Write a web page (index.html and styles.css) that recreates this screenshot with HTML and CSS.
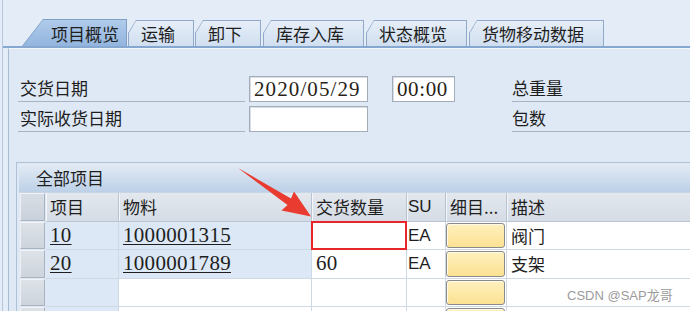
FILE: index.html
```html
<!DOCTYPE html>
<html lang="zh">
<head>
<meta charset="utf-8">
<link rel="stylesheet" href="styles.css">
</head>
<body>
<div class="screen">
  <div class="tabs">
    <div class="tab active"><span class="tab-in">项目概览</span></div>
    <div class="tab"><span class="tab-in">运输</span></div>
    <div class="tab"><span class="tab-in">卸下</span></div>
    <div class="tab wide"><span class="tab-in">库存入库</span></div>
    <div class="tab wide"><span class="tab-in">状态概览</span></div>
    <div class="tab wide"><span class="tab-in">货物移动数据</span></div>
  </div>
  <div class="panel">
    <div class="form">
      <div class="frow">
        <div class="label">交货日期</div>
        <div class="input date">2020/05/29</div>
        <div class="input time">00:00</div>
        <div class="label rlabel">总重量</div>
      </div>
      <div class="frow">
        <div class="label">实际收货日期</div>
        <div class="input date"></div>
        <div class="time-gap"></div>
        <div class="label rlabel">包数</div>
      </div>
    </div>

    <div class="grid">
      <div class="gtitle">全部项目</div>
      <div class="grow ghead">
        <div class="sel"></div>
        <div class="cell">项目</div>
        <div class="cell">物料</div>
        <div class="cell">交货数量</div>
        <div class="cell latin">SU</div>
        <div class="cell">细目...</div>
        <div class="cell">描述</div>
      </div>
      <div class="grow">
        <div class="sel"></div>
        <div class="cell ro num"><span class="link">10</span></div>
        <div class="cell ro num"><span class="link">1000001315</span></div>
        <div class="cell num flagged"></div>
        <div class="cell latin">EA</div>
        <div class="cell bcell"><span class="ybtn"></span></div>
        <div class="cell">阀门</div>
      </div>
      <div class="grow">
        <div class="sel"></div>
        <div class="cell ro num"><span class="link">20</span></div>
        <div class="cell ro num"><span class="link">1000001789</span></div>
        <div class="cell num">60</div>
        <div class="cell latin">EA</div>
        <div class="cell bcell"><span class="ybtn"></span></div>
        <div class="cell">支架</div>
      </div>
      <div class="grow">
        <div class="sel"></div>
        <div class="cell ro"></div>
        <div class="cell"></div>
        <div class="cell"></div>
        <div class="cell"></div>
        <div class="cell bcell"><span class="ybtn"></span></div>
        <div class="cell"></div>
      </div>
      <div class="grow">
        <div class="sel"></div>
        <div class="cell ro"></div>
        <div class="cell"></div>
        <div class="cell"></div>
        <div class="cell"></div>
        <div class="cell bcell"><span class="ybtn"></span></div>
        <div class="cell"></div>
      </div>
    </div>
  </div>

  <svg class="arrow" width="690" height="311" viewBox="0 0 690 311">
    <polygon points="235,168 288,198.5 291,191.5 308,216.5 278.5,210.5 284.5,205" fill="#e93b2f"/>
  </svg>
  <div class="watermark">CSDN @SAP龙哥</div>
</div>
</body>
</html>
```

FILE: styles.css
```css
* { box-sizing: border-box; }

html, body {
  margin: 0;
  padding: 0;
  background: #e4edf7;
}

.screen {
  position: relative;
  width: 690px;
  height: 311px;
  overflow: hidden;
  margin-left: 2px;
  border-left: 1px solid #b8c7d9;
  background: #e4edf7;
  font-family: "Noto Sans CJK SC", "Noto Sans", sans-serif;
  color: #1e1e1e;
}

/* ---------- tabs ---------- */
.tabs {
  display: flex;
  align-items: flex-end;
  padding: 19px 0 0 19px;
  height: 48px;
  border-bottom: 2px solid #86a7cf;
  gap: 1px;
}

.tab {
  flex-shrink: 0;
  height: 26px;
  padding: 1px 1px 0 1px;
  background: #91a9c8;
  clip-path: polygon(8px 0, 100% 0, 100% 100%, 0 100%, 0 13px);
}

.tab.wide {
  margin-left: 1px;
}

.tab-in {
  display: flex;
  align-items: center;
  height: 100%;
  padding: 0 18px 0 12px;
  font-size: 17px;
  line-height: 1;
  background: linear-gradient(#e6eef8, #d0dff0);
  clip-path: polygon(7px 0, 100% 0, 100% 100%, 0 100%, 0 12px);
}

.tab.wide .tab-in {
  padding-right: 19px;
}

.tab.active {
  height: 27px;
  width: 105px;
  background: #7f9fc8;
  clip-path: polygon(21px 0, 100% 0, 100% 100%, 0 100%);
}

.tab.active .tab-in {
  padding: 0 0 0 28px;
  background: linear-gradient(#b0cbea, #93b5de);
  clip-path: polygon(20px 0, 100% 0, 100% 100%, 0 100%);
}

/* ---------- panel ---------- */
.panel {
  margin-left: 5px;
  border-left: 1px solid #a9bbd1;
  border-top: 1px solid #f2f6fb;
  background: #dfe9f5;
  height: 300px;
}

.form {
  padding: 27px 0 0 9px;
}

.frow {
  display: flex;
  align-items: stretch;
  height: 26px;
}

.frow + .frow {
  margin-top: 4px;
}

.frow > * {
  flex-shrink: 0;
}

.label {
  width: 227px;
  padding-left: 2px;
  border-bottom: 1px solid #a7b3c1;
  font-size: 17px;
  line-height: 24px;
  white-space: nowrap;
}

.frow > .rlabel {
  flex: 1 0 auto;
  width: auto;
  margin-left: 57px;
  padding-left: 0;
}

.input {
  background: #fff;
  border: 1px solid #a3adb9;
  box-shadow: inset 1px 1px 0 #d9dee4;
  font-family: "Liberation Serif", serif;
  font-size: 21px;
  line-height: 24px;
  padding-left: 4px;
  color: #2a1f18;
}

.date {
  width: 119px;
  margin-left: 4px;
  letter-spacing: 1.1px;
}

.time {
  width: 63px;
  margin-left: 24px;
  letter-spacing: 0.6px;
}

.time-gap {
  width: 87px;
}

/* ---------- grid ---------- */
.grid {
  margin: 30px 0 0 7px;
  border-left: 1px solid #b1c1d5;
  border-top: 1px solid #b1c1d5;
  padding: 1px 0 0 2px;
  background: #dfe9f5;
}

.gtitle {
  height: 29px;
  padding-left: 17px;
  font-size: 17px;
  line-height: 28px;
  background: linear-gradient(#e3ebf5, #bcd0e7);
  border-bottom: 1px solid #c8d5e4;
}

.grow {
  display: grid;
  grid-template-columns: 27px 73px 193px 95px 39px 61px 1fr;
  height: 28.5px;
}

.sel {
  margin: 0 1px 1px 1px;
  background: linear-gradient(#dde2e8, #cdd4dc);
  border-top: 1px solid #f1f3f6;
  border-left: 1px solid #eef1f4;
  border-right: 1px solid #a9b3bf;
  border-bottom: 1px solid #a9b3bf;
}

.cell {
  background: #fff;
  border-right: 1px solid #cfd9e4;
  border-bottom: 1px solid #cfd9e4;
  padding-left: 4px;
  font-size: 17px;
  line-height: 27px;
  white-space: nowrap;
  overflow: hidden;
}

.ghead .cell {
  background: linear-gradient(#e3e8ee, #d5dce5);
  border-right: 1px solid #b7c3d1;
  border-bottom: 1px solid #b9c5d2;
  box-shadow: inset 1px 0 0 #f4f6f9;
}

.ghead .sel {
  background: linear-gradient(#d8dee5, #c9d1da);
}

.cell.ro {
  background: #dce8f5;
}

.num {
  font-family: "Liberation Serif", serif;
  font-size: 21px;
  letter-spacing: 0.3px;
}

.latin {
  font-family: "Liberation Sans", sans-serif;
  font-size: 17px;
  padding-left: 1px;
}

.link {
  text-decoration: underline;
  text-decoration-thickness: 1px;
  text-underline-offset: 2px;
}

.flagged {
  outline: 2px solid #e8262a;
  outline-offset: -2px;
  position: relative;
  left: -1px;
  top: -1px;
  height: calc(100% + 1px);
  width: calc(100% + 1px);
}

.bcell {
  padding: 1px 1px 1px 0;
  background: #fff;
}

.ybtn {
  display: block;
  height: 100%;
  border: 1px solid #8a8a8a;
  border-radius: 3px;
  background: linear-gradient(#fff0bd, #fbe192);
  box-shadow: inset 1px 1px 0 #fffbe8;
}

/* ---------- overlays ---------- */
.arrow {
  position: absolute;
  left: 0;
  top: 0;
  pointer-events: none;
}

.watermark {
  position: absolute;
  left: 564px;
  top: 288px;
  font-family: "Liberation Sans", "Noto Sans CJK SC", sans-serif;
  font-size: 13px;
  line-height: 16px;
  color: #9b9b9b;
}
```
